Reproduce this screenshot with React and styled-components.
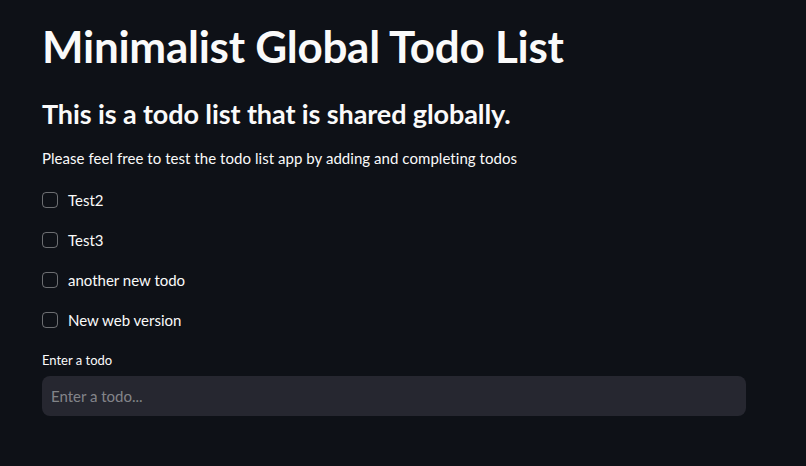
import styled, { createGlobalStyle } from "styled-components"

const GlobalStyle = createGlobalStyle`
    html, body {
        margin: 0;
        padding: 0;
        background-color: #0e1117;
    }
    body {
        font-family: Lato, "Liberation Sans", sans-serif;
        color: #fafafa;
    }
`

const Page = styled.main`
    display: flex;
    flex-direction: column;
    width: 746px;
    min-height: 466px;
    padding: 18px 0 0 42px;
    box-sizing: border-box;
`

const Title = styled.h1`
    margin: 0;
    font-size: 44px;
    font-weight: 700;
    line-height: 56px;
    letter-spacing: -0.27px;
`

const Subtitle = styled.h2`
    margin: 22px 0 0;
    font-size: 27px;
    font-weight: 700;
    line-height: 36px;
    letter-spacing: -0.1px;
`

const Text = styled.p`
    margin: 14px 0 0;
    font-size: 15px;
    line-height: 24px;
    letter-spacing: 0.05px;
`

const List = styled.div`
    display: flex;
    flex-direction: column;
    gap: 16px;
    margin-top: 18px;
`

const Row = styled.label`
    display: flex;
    align-items: center;
    gap: 10px;
    height: 24px;
    font-size: 15px;
    cursor: pointer;
`

const Box = styled.span`
    width: 16px;
    height: 16px;
    box-sizing: border-box;
    border: 1px solid rgba(250, 250, 250, 0.4);
    border-radius: 4px;
`

const Field = styled.div`
    display: flex;
    flex-direction: column;
    gap: 6px;
    margin-top: 18px;
`

const FieldLabel = styled.label`
    font-size: 13px;
    line-height: 20px;
`

const Input = styled.input`
    width: 100%;
    height: 40px;
    box-sizing: border-box;
    padding: 0 9px;
    border: none;
    border-radius: 8px;
    background-color: #262730;
    color: #fafafa;
    font-family: inherit;
    font-size: 15px;
    outline: none;

    &::placeholder {
        color: rgba(250, 250, 250, 0.45);
    }
`

const todos = ["Test2", "Test3", "another new todo", "New web version"]

const App = () => {
    return (
        <>
            <GlobalStyle />
            <Page>
                <Title>Minimalist Global Todo List</Title>
                <Subtitle>This is a todo list that is shared globally.</Subtitle>
                <Text>Please feel free to test the todo list app by adding and completing todos</Text>
                <List>
                    {todos.map((todo) => (
                        <Row key={todo}>
                            <Box />
                            {todo}
                        </Row>
                    ))}
                </List>
                <Field>
                    <FieldLabel>Enter a todo</FieldLabel>
                    <Input placeholder="Enter a todo..." />
                </Field>
            </Page>
        </>
    )
}

export default App
